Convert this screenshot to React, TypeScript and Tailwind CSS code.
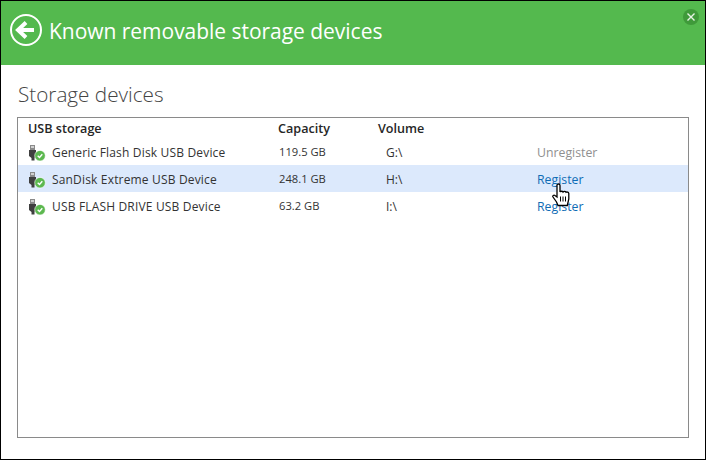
const font = { fontFamily: '"Open Sans", "Noto Sans", sans-serif' }

const devices = [
  { name: 'Generic Flash Disk USB Device', size: '119.5 GB', volume: 'G:\\', action: 'Unregister' },
  { name: 'SanDisk Extreme USB Device', size: '248.1 GB', volume: 'H:\\', action: 'Register', active: true },
  { name: 'USB FLASH DRIVE USB Device', size: '63.2 GB', volume: 'I:\\', action: 'Register' },
]

function UsbIcon() {
  return (
    <svg width="20" height="20" viewBox="0 0 20 20" className="shrink-0">
      <rect x="2" y="3" width="5" height="5" fill="#8a8a8a" />
      <rect x="3" y="4" width="3" height="2" fill="#d0d0d0" />
      <path d="M1 8h7v6l-1.500 2v2.500h-3v-2.500l-2.500-2z" fill="#3f3f3f" />
      <circle cx="12" cy="13.700" r="5.300" fill="#5cb84f" stroke="#fff" strokeWidth="0.600" />
      <path d="M9.700 13.700l1.800 1.800 2.800-3.200" fill="none" stroke="#fff" strokeWidth="1.400" />
    </svg>
  )
}

function HandCursor() {
  return (
    <svg width="18" height="24" viewBox="0 0 18 24" className="absolute left-[551px] top-[182px]">
      <path
        d="M6.500 1c1 0 1.500.6 1.500 1.500v6.500c.5-1 2.500-1 3 0 .6-.8 2.400-.8 3 .3.800-.6 2.500-.3 2.800 1V16l-1.500 6.500H6L4.500 19 1 14c-.8-1.200.8-2.500 2-1.500l2 1.500V2.500c0-.9.5-1.500 1.500-1.500z"
        fill="#fff"
        stroke="#000"
        strokeWidth="1.300"
      />
      <path d="M8.500 13.500v5M11 13.500v5M13.500 13.500v5" stroke="#000" strokeWidth="1" />
    </svg>
  )
}

export default function App() {
  return (
    <div className="relative w-[706px] h-[460px] bg-white border border-black flex flex-col overflow-hidden" style={font}>
      <div className="h-[64px] shrink-0 bg-[#54b94e] flex items-start pl-[8px] pr-[6px] pt-[12px]">
        <svg width="34" height="34" viewBox="0 0 34 34" className="shrink-0">
          <circle cx="17" cy="17" r="15" fill="none" stroke="#fff" strokeWidth="2" />
          <path d="M9 17h16" stroke="#fff" strokeWidth="4" />
          <path d="M17 9.500L9 17l8 7.500" fill="none" stroke="#fff" strokeWidth="4" />
        </svg>
        <h1 className="ml-[6px] text-[21px] tracking-[-0.03px] text-white leading-[36px]">Known removable storage devices</h1>
        <button className="ml-auto -mt-[4px] w-[16px] h-[16px] rounded-full bg-[#3f9a3a] flex items-center justify-center">
          <svg width="10" height="10" viewBox="0 0 10 10">
            <path d="M1.500 1.500l7 7M8.500 1.500l-7 7" stroke="#e8f4e6" strokeWidth="1.400" />
          </svg>
        </button>
      </div>

      <div className="flex-1 flex flex-col px-[16px] pb-[21px]">
        <h2 className="h-[52px] pt-[15px] pl-[1px] text-[20.700px] font-light leading-[28px] text-[#444444]">Storage devices</h2>
        <div className="flex-1 border border-[#8a8a8a]">
          <div className="h-[20px] pt-[2px] grid grid-cols-[250px_100px_159px_1fr] pl-[10px] items-center text-[12.600px] font-semibold text-[#262626]">
            <span>USB storage</span>
            <span>Capacity</span>
            <span>Volume</span>
          </div>
          {devices.map(d => (
            <div
              key={d.name}
              className={`h-[27px] grid grid-cols-[250px_100px_159px_1fr] pl-[10px] items-center text-[12px] text-[#333333] ${d.active ? 'bg-[#dce9fc]' : ''}`}
            >
              <span className="flex items-center gap-[4px] tracking-[0.17px]">
                <UsbIcon />
                <span className="pt-[2px]">{d.name}</span>
              </span>
              <span className="pl-[1px] pt-[2px] text-[11.200px]">{d.size}</span>
              <span className="pl-[8px] pt-[2px]">{d.volume}</span>
              <span className={d.action === 'Unregister' ? 'pt-[4px] text-[#8f8f8f] text-[12.300px]' : 'pt-[4px] text-[#0f6cb5] text-[12.300px]'}>{d.action}</span>
            </div>
          ))}
        </div>
      </div>
      <HandCursor />
    </div>
  )
}
